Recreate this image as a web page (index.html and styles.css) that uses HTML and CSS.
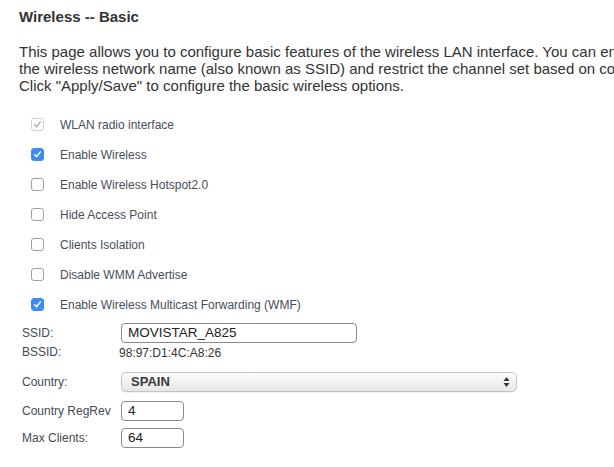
FILE: index.html
```html
<!DOCTYPE html>
<html>
<head>
<meta charset="utf-8">
<link rel="stylesheet" href="styles.css">
</head>
<body>
<div class="page">
  <h1 class="title">Wireless -- Basic</h1>
  <p class="intro">This page allows you to configure basic features of the wireless LAN interface. You can enable or disable the wireless LAN interface, hide the network from active scans, set<br>the wireless network name (also known as SSID) and restrict the channel set based on country requirements.<br>Click "Apply/Save" to configure the basic wireless options.</p>

  <ul class="checks">
    <li class="check-row"><span class="cb cb-disabled"><svg viewBox="0 0 13 13" width="13" height="13"><path d="M3.6 6.8 L5.6 8.8 L9.4 3.9" fill="none" stroke="#a8a8a8" stroke-width="1.3" stroke-linecap="round" stroke-linejoin="round"/></svg></span><span class="check-label">WLAN radio interface</span></li>
    <li class="check-row"><span class="cb cb-on"><svg viewBox="0 0 13 13" width="13" height="13"><path d="M3.6 6.8 L5.6 8.8 L9.4 3.9" fill="none" stroke="#fff" stroke-width="1.5" stroke-linecap="round" stroke-linejoin="round"/></svg></span><span class="check-label">Enable Wireless</span></li>
    <li class="check-row"><span class="cb"></span><span class="check-label">Enable Wireless Hotspot2.0</span></li>
    <li class="check-row"><span class="cb"></span><span class="check-label">Hide Access Point</span></li>
    <li class="check-row"><span class="cb"></span><span class="check-label">Clients Isolation</span></li>
    <li class="check-row"><span class="cb"></span><span class="check-label">Disable WMM Advertise</span></li>
    <li class="check-row"><span class="cb cb-on"><svg viewBox="0 0 13 13" width="13" height="13"><path d="M3.6 6.8 L5.6 8.8 L9.4 3.9" fill="none" stroke="#fff" stroke-width="1.5" stroke-linecap="round" stroke-linejoin="round"/></svg></span><span class="check-label">Enable Wireless Multicast Forwarding (WMF)</span></li>
  </ul>

  <div class="form">
    <div class="lbl">SSID:</div>
    <div class="val"><span class="field field-ssid">MOVISTAR_A825</span></div>
    <div class="lbl lbl-top">BSSID:</div>
    <div class="val val-top">98:97:D1:4C:A8:26</div>
    <div class="lbl">Country:</div>
    <div class="val"><span class="select"><span class="select-text">SPAIN</span><svg class="arrows" viewBox="0 0 7 12" width="7" height="12"><path d="M3.5 1 L6.5 5 L0.5 5 Z" fill="#333"/><path d="M3.5 11 L6.5 7 L0.5 7 Z" fill="#333"/></svg></span></div>
    <div class="lbl">Country RegRev</div>
    <div class="val"><span class="field field-small">4</span></div>
    <div class="lbl">Max Clients:</div>
    <div class="val"><span class="field field-small">64</span></div>
  </div>
</div>
</body>
</html>
```

FILE: styles.css
```css
html, body {
  margin: 0;
  padding: 0;
  background: #fff;
}

body {
  font-family: "Liberation Sans", Arial, sans-serif;
  color: #333;
  overflow: hidden;
}

.page {
  padding: 8px 0 0 19px;
  width: 1400px;
}

.title {
  font-size: 15px;
  font-weight: bold;
  line-height: 18px;
  margin: 0;
  color: #333;
}

.intro {
  font-size: 15px;
  line-height: 17.2px;
  margin: 17px 0 0 0;
  color: #333;
  white-space: nowrap;
}

.checks {
  list-style: none;
  margin: 15px 0 0 0;
  padding: 0 0 0 12px;
}

.check-row {
  height: 30px;
  display: flex;
  align-items: center;
}

.cb {
  width: 11px;
  height: 11px;
  border: 1px solid #a0a0a0;
  border-radius: 3px;
  background: #fff;
  flex: none;
  position: relative;
  box-sizing: content-box;
}

.cb svg {
  position: absolute;
  left: -1px;
  top: -1px;
}

.cb-on {
  background: #3b8df0;
  border-color: #3b8df0;
}

.cb-disabled {
  border-color: #d0d0d0;
}

.check-label {
  font-size: 12px;
  color: #474e5a;
  margin-left: 16px;
}

.form {
  display: grid;
  grid-template-columns: 97px auto;
  grid-template-rows: 20px 29px 29px 27px 20px;
  margin: 3px 0 0 3px;
  font-size: 12px;
  color: #434a56;
}

.lbl {
  display: flex;
  align-items: center;
  height: 20px;
}

.val {
  display: flex;
  align-items: flex-start;
  height: 20px;
}

.lbl-top, .val-top {
  line-height: 21px;
}

.val-top {
  color: #333;
}

.field {
  box-sizing: border-box;
  height: 20px;
  border: 1px solid #8a8a8a;
  border-radius: 4px;
  margin-left: 2px;
  padding: 0 6px;
  font-size: 13.5px;
  line-height: 18px;
  color: #222;
  background: #fff;
}

.field-ssid {
  width: 236px;
}

.field-small {
  width: 63px;
}

.select {
  box-sizing: border-box;
  margin-left: 2px;
  width: 396px;
  height: 20px;
  border: 1px solid #c3c3c3;
  border-radius: 5px;
  background: linear-gradient(#fdfdfd, #e6e6e6);
  display: flex;
  align-items: center;
  justify-content: space-between;
  padding: 0 6px 0 9px;
  box-shadow: 0 0.5px 0 rgba(0,0,0,0.1);
}

.select-text {
  font-size: 13px;
  font-weight: bold;
  color: #3a3a3a;
}

.arrows {
  display: block;
}
```
